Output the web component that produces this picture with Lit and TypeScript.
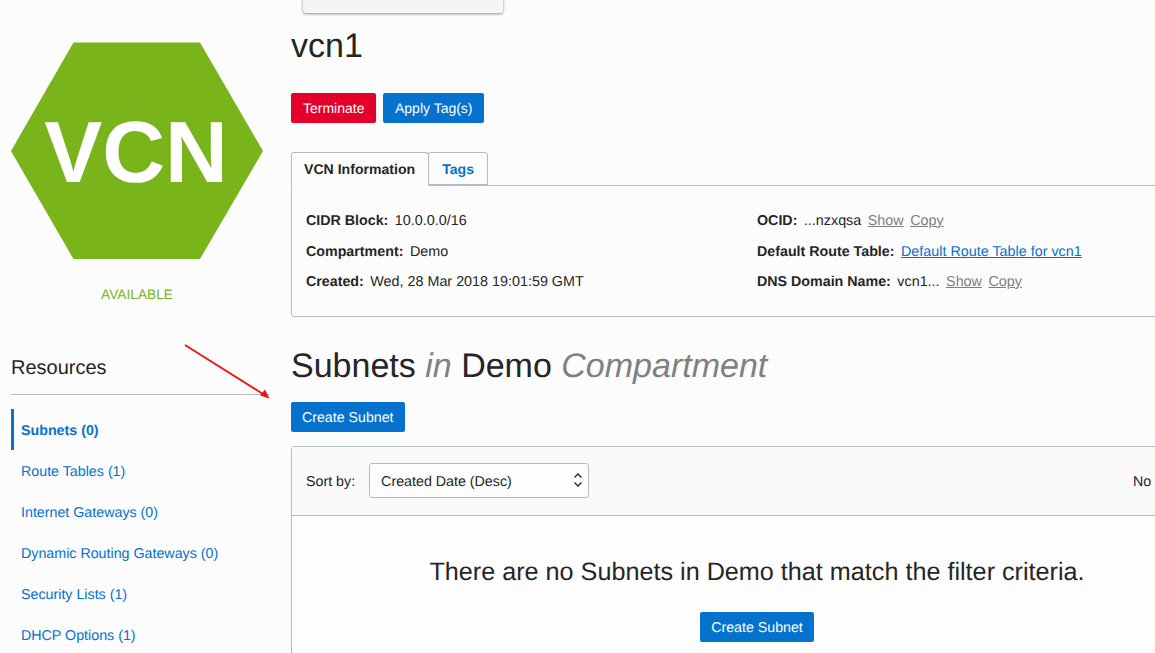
import { LitElement, html, css } from 'lit';
import { customElement } from 'lit/decorators.js';

const RESOURCES = [
  'Subnets (0)',
  'Route Tables (1)',
  'Internet Gateways (0)',
  'Dynamic Routing Gateways (0)',
  'Security Lists (1)',
  'DHCP Options (1)',
];

@customElement('app-root')
export class AppRoot extends LitElement {
  static styles = css`
    :host {
      display: block;
      position: relative;
      width: 1155px;
      height: 653px;
      overflow: hidden;
      background: #fcfcfc;
      color: #252525;
      font-family: 'Liberation Sans', Arial, sans-serif;
      font-size: 14.25px;
      text-rendering: geometricPrecision;
    }
    .page { display: flex; align-items: flex-start; }

    /* left column */
    .side { width: 259px; flex: none; padding: 42px 21px 0 11px; }
    .hex { display: block; width: 252px; height: 217px; }
    .hex text {
      font-family: 'Liberation Sans', Arial, sans-serif;
      font-size: 87px;
      font-weight: 700;
      fill: #fff;
    }
    .state {
      width: 252px;
      margin-top: 28px;
      text-align: center;
      font-size: 13.7px;
      line-height: 16px;
      color: #78b41a;
    }
    .side h2 {
      margin: 54px 0 0;
      padding-bottom: 14px;
      font-size: 20px;
      font-weight: 400;
      line-height: 23px;
      border-bottom: 1px solid #b5b9c2;
    }
    .res { list-style: none; margin: 14px 0 0; padding: 0; }
    .res li {
      height: 41px;
      line-height: 45px;
      padding-left: 10px;
      color: #0572ce;
    }
    .res li.on {
      padding-left: 7px;
      border-left: 3px solid #0572ce;
      font-weight: 700;
    }

    /* main column */
    .main { width: 932px; flex: none; }
    h1 {
      margin: 27px 0 0;
      font-size: 34px;
      font-weight: 400;
      line-height: 39px;
    }
    .actions { display: flex; gap: 7px; margin-top: 27px; }
    .btn {
      display: inline-block;
      height: 30px;
      line-height: 30px;
      padding: 0 11.5px;
      border-radius: 2px;
      background: #0572ce;
      color: #fff;
      font-size: 14px;
    }
    .btn.red { background: #e4002b; padding: 0 12px; }
    .btn.wide { padding: 0 11px; font-size: 14.2px; line-height: 32px; }

    .tabs { display: flex; margin-top: 29px; position: relative; z-index: 1; }
    .tab {
      height: 32px;
      line-height: 33px;
      padding: 0 13px 0 12px;
      border: 1px solid #b5b9c2;
      border-radius: 3px 3px 0 0;
      font-size: 14.1px;
      font-weight: 700;
      background: #fcfcfc;
    }
    .tab.on { border-bottom-color: #fcfcfc; }
    .tab.link { color: #0572ce; margin-left: -1px; height: 31px; padding: 0 13px; }

    .info {
      display: grid;
      grid-template-columns: 451px 1fr;
      box-sizing: border-box;
      height: 132px;
      margin-top: -1px;
      padding: 20px 14px 0;
      border: 1px solid #b5b9c2;
      border-radius: 0 0 0 3px;
    }
    .row { height: 30.5px; line-height: 30.5px; white-space: nowrap; font-size: 14.35px; }
    .row b { margin-right: 2.5px; font-size: 14.25px; }
    .row a { color: #0572ce; text-decoration: underline; }
    .row a.muted { color: #808080; margin-left: 2.5px; }

    .title {
      margin: 30px 0 0;
      font-size: 34px;
      font-weight: 400;
      line-height: 39px;
    }
    .title em { color: #808080; }
    .create { margin-top: 16px; }

    .list {
      margin-top: 14px;
      border: 1px solid #b5b9c2;
      border-radius: 3px 3px 0 0;
      height: 300px;
      background: #fdfdfd;
    }
    .bar {
      display: flex;
      align-items: center;
      box-sizing: border-box;
      height: 69px;
      padding: 0 15px 2px 14px;
      background: #fafafa;
      border-bottom: 1px solid #b5b9c2;
    }
    .bar span { padding-top: 4px; }
    .select {
      display: flex;
      align-items: center;
      justify-content: space-between;
      box-sizing: border-box;
      width: 220px;
      height: 35px;
      margin-left: 14px;
      padding: 0 5px 0 11px;
      border: 1px solid #b5b9c2;
      border-radius: 3px;
      background: #fdfdfd;
    }
    .select svg { display: block; }
    .count { margin-left: auto; width: 74px; }
    .empty { display: flex; flex-direction: column; align-items: center; padding-top: 42px; }
    .empty p { margin: 0 0 26px; font-size: 25.2px; line-height: 28px; }

    /* overlays */
    .menu {
      position: absolute;
      left: 303px;
      top: -4px;
      width: 200px;
      height: 17px;
      background: #f5f5f5;
      border-radius: 0 0 3px 3px;
      box-shadow: 0 1px 3px rgba(0, 0, 0, 0.45);
    }
    .arrow { position: absolute; left: 180px; top: 340px; pointer-events: none; }
  `;

  render() {
    return html`
      <div class="page">
        <aside class="side">
          <svg class="hex" viewBox="0 0 252 217">
            <polygon points="62.5,0.5 189,0.5 252,109 189,217 62.5,217 0,109" fill="#78b41a"></polygon>
            <text x="125" y="140" text-anchor="middle">VCN</text>
          </svg>
          <div class="state">AVAILABLE</div>
          <h2>Resources</h2>
          <ul class="res">
            ${RESOURCES.map((r, i) => html`<li class=${i === 0 ? 'on' : ''}>${r}</li>`)}
          </ul>
        </aside>

        <main class="main">
          <h1>vcn1</h1>
          <div class="actions">
            <span class="btn red">Terminate</span>
            <span class="btn">Apply Tag(s)</span>
          </div>

          <div class="tabs">
            <div class="tab on">VCN Information</div>
            <div class="tab link">Tags</div>
          </div>
          <div class="info">
            <div>
              <div class="row"><b>CIDR Block:</b> 10.0.0.0/16</div>
              <div class="row"><b>Compartment:</b> Demo</div>
              <div class="row"><b>Created:</b> Wed, 28 Mar 2018 19:01:59 GMT</div>
            </div>
            <div>
              <div class="row"><b>OCID:</b> ...nzxqsa <a class="muted">Show</a> <a class="muted">Copy</a></div>
              <div class="row"><b>Default Route Table:</b> <a>Default Route Table for vcn1</a></div>
              <div class="row"><b>DNS Domain Name:</b> vcn1... <a class="muted">Show</a> <a class="muted">Copy</a></div>
            </div>
          </div>

          <h2 class="title">Subnets <em>in</em> Demo <em>Compartment</em></h2>
          <div class="create"><span class="btn wide">Create Subnet</span></div>

          <div class="list">
            <div class="bar">
              <span>Sort by:</span>
              <div class="select">
                <span>Created Date (Desc)</span>
                <svg width="10" height="16" viewBox="0 0 10 16" fill="none" stroke="#252525" stroke-width="1.3">
                  <path d="M1.5 5.5 5 2l3.5 3.5M1.5 10.5 5 14l3.5-3.5"></path>
                </svg>
              </div>
              <span class="count">No</span>
            </div>
            <div class="empty">
              <p>There are no Subnets in Demo that match the filter criteria.</p>
              <span class="btn wide">Create Subnet</span>
            </div>
          </div>
        </main>
      </div>

      <div class="menu"></div>
      <svg class="arrow" width="95" height="63" viewBox="180 340 95 63">
        <path d="M185 345 263 394" stroke="#f41010" stroke-width="1.8" fill="none"></path>
        <path d="M269.5 398.5 260 395.5 265 389.5z" fill="#f41010"></path>
      </svg>
    `;
  }
}
